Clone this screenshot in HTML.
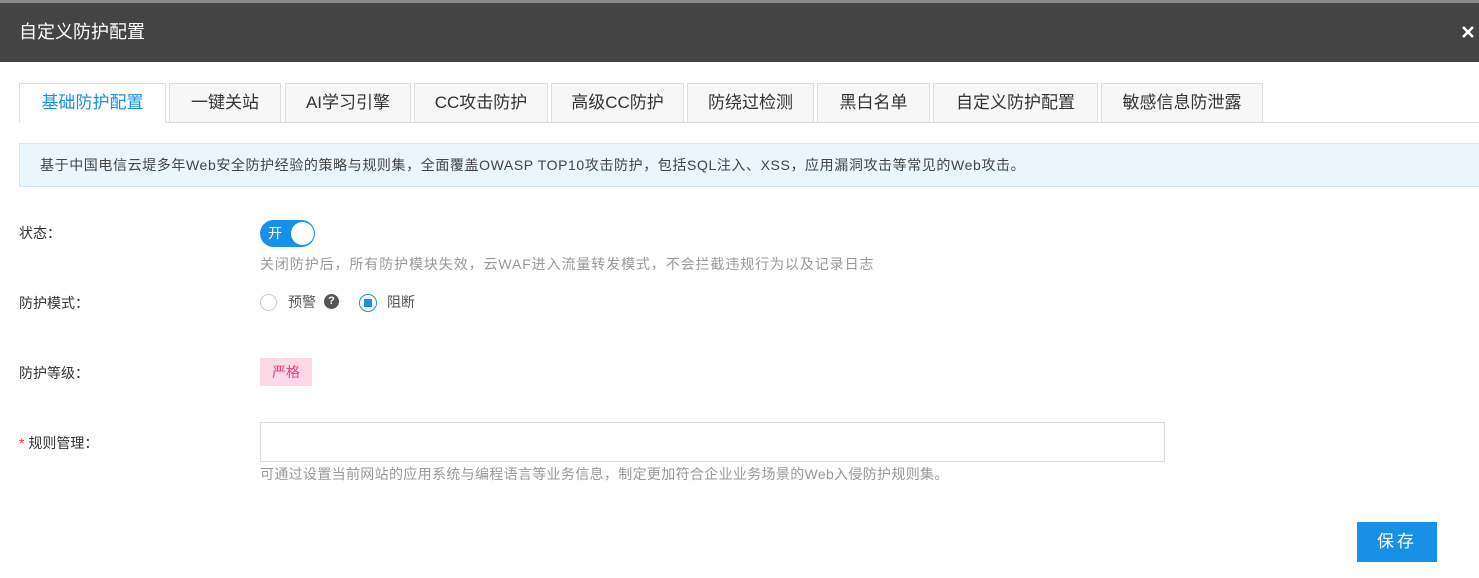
<!DOCTYPE html>
<html><head><meta charset="utf-8"><style>
*{margin:0;padding:0;box-sizing:border-box}
body{width:1479px;height:578px;background:#fff;position:relative;overflow:hidden;font-family:"Liberation Sans","Noto Sans CJK SC",sans-serif;color:#333}
.a{position:absolute;white-space:nowrap}
.tab{position:absolute;top:83px;height:40px;border:1px solid #ddd;background:#f7f7f7;font-size:17px;line-height:38px;text-align:center;color:#333}
</style></head><body>
<div class="a" style="left:0;top:0;width:1479px;height:3px;background:#8a8a8a"></div>
<div class="a" style="left:0;top:3px;width:1479px;height:59px;background:#444"></div>
<div class="a" style="left:19px;top:20px;font-size:18px;color:#fff;line-height:24px">自定义防护配置</div>
<svg class="a" style="left:1462px;top:26px" width="12" height="12" viewBox="0 0 12 12"><path d="M1 1L11 11M11 1L1 11" stroke="#fff" stroke-width="2.6"/></svg>

<div class="a" style="left:19px;top:122px;width:1460px;height:1px;background:#ddd"></div>
<div class="tab" style="left:19px;width:147px;background:#fff;border-bottom-color:#fff;color:#1890e8">基础防护配置</div>
<div class="tab" style="left:169px;width:112px">一键关站</div>
<div class="tab" style="left:285px;width:126px">AI学习引擎</div>
<div class="tab" style="left:414px;width:134px">CC攻击防护</div>
<div class="tab" style="left:551px;width:133px">高级CC防护</div>
<div class="tab" style="left:687px;width:127px">防绕过检测</div>
<div class="tab" style="left:817px;width:113px">黑白名单</div>
<div class="tab" style="left:933px;width:165px">自定义防护配置</div>
<div class="tab" style="left:1101px;width:162px">敏感信息防泄露</div>

<div class="a" style="left:19px;top:143px;width:1462px;height:44px;background:#eaf5fc;border:1px solid #d3e8f7"></div>
<div class="a" style="left:40px;top:155px;font-size:14px;letter-spacing:0.6px;line-height:20px;color:#444">基于中国电信云堤多年Web安全防护经验的策略与规则集，全面覆盖OWASP TOP10攻击防护，包括SQL注入、XSS，应用漏洞攻击等常见的Web攻击。</div>

<div class="a" style="left:19px;top:223px;font-size:14px;line-height:20px">状态：</div>
<div class="a" style="left:260px;top:220px;width:55px;height:27px;border-radius:14px;background:#1890e8"></div>
<div class="a" style="left:268px;top:224px;font-size:14px;color:#fff;line-height:18px">开</div>
<div class="a" style="left:291px;top:222px;width:23px;height:23px;border-radius:50%;background:#fff"></div>
<div class="a" style="left:260px;top:254px;font-size:14px;letter-spacing:0.9px;line-height:20px;color:#999">关闭防护后，所有防护模块失效，云WAF进入流量转发模式，不会拦截违规行为以及记录日志</div>

<div class="a" style="left:19px;top:293px;font-size:14px;line-height:20px">防护模式：</div>
<div class="a" style="left:260px;top:294px;width:17px;height:17px;border-radius:50%;border:1px solid #ccc"></div>
<div class="a" style="left:288px;top:292px;font-size:14px;line-height:20px;color:#555">预警</div>
<div class="a" style="left:324px;top:294px;width:15px;height:15px;border-radius:50%;background:#555;color:#fff;font-size:11px;font-weight:bold;line-height:15px;text-align:center">?</div>
<div class="a" style="left:359px;top:294px;width:18px;height:18px;border-radius:50%;border:1px solid #1890e8"></div>
<div class="a" style="left:364px;top:299px;width:8px;height:8px;background:#1890e8"></div>
<div class="a" style="left:387px;top:292px;font-size:14px;line-height:20px;color:#555">阻断</div>

<div class="a" style="left:19px;top:363px;font-size:14px;line-height:20px">防护等级：</div>
<div class="a" style="left:260px;top:358px;width:52px;height:28px;background:#fdd8e6;color:#e8407f;font-size:14px;line-height:28px;text-align:center">严格</div>

<div class="a" style="left:19px;top:433px;font-size:14px;line-height:20px"><span style="color:#e33">*</span> 规则管理：</div>
<div class="a" style="left:260px;top:422px;width:905px;height:40px;border:1px solid #d9d9d9"></div>
<div class="a" style="left:260px;top:464px;font-size:14px;letter-spacing:0.33px;line-height:20px;color:#999">可通过设置当前网站的应用系统与编程语言等业务信息，制定更加符合企业业务场景的Web入侵防护规则集。</div>

<div class="a" style="left:1357px;top:522px;width:80px;height:40px;background:#1890e8;color:#fff;font-size:17px;line-height:40px;text-align:center;letter-spacing:3px">保存</div>
</body></html>
